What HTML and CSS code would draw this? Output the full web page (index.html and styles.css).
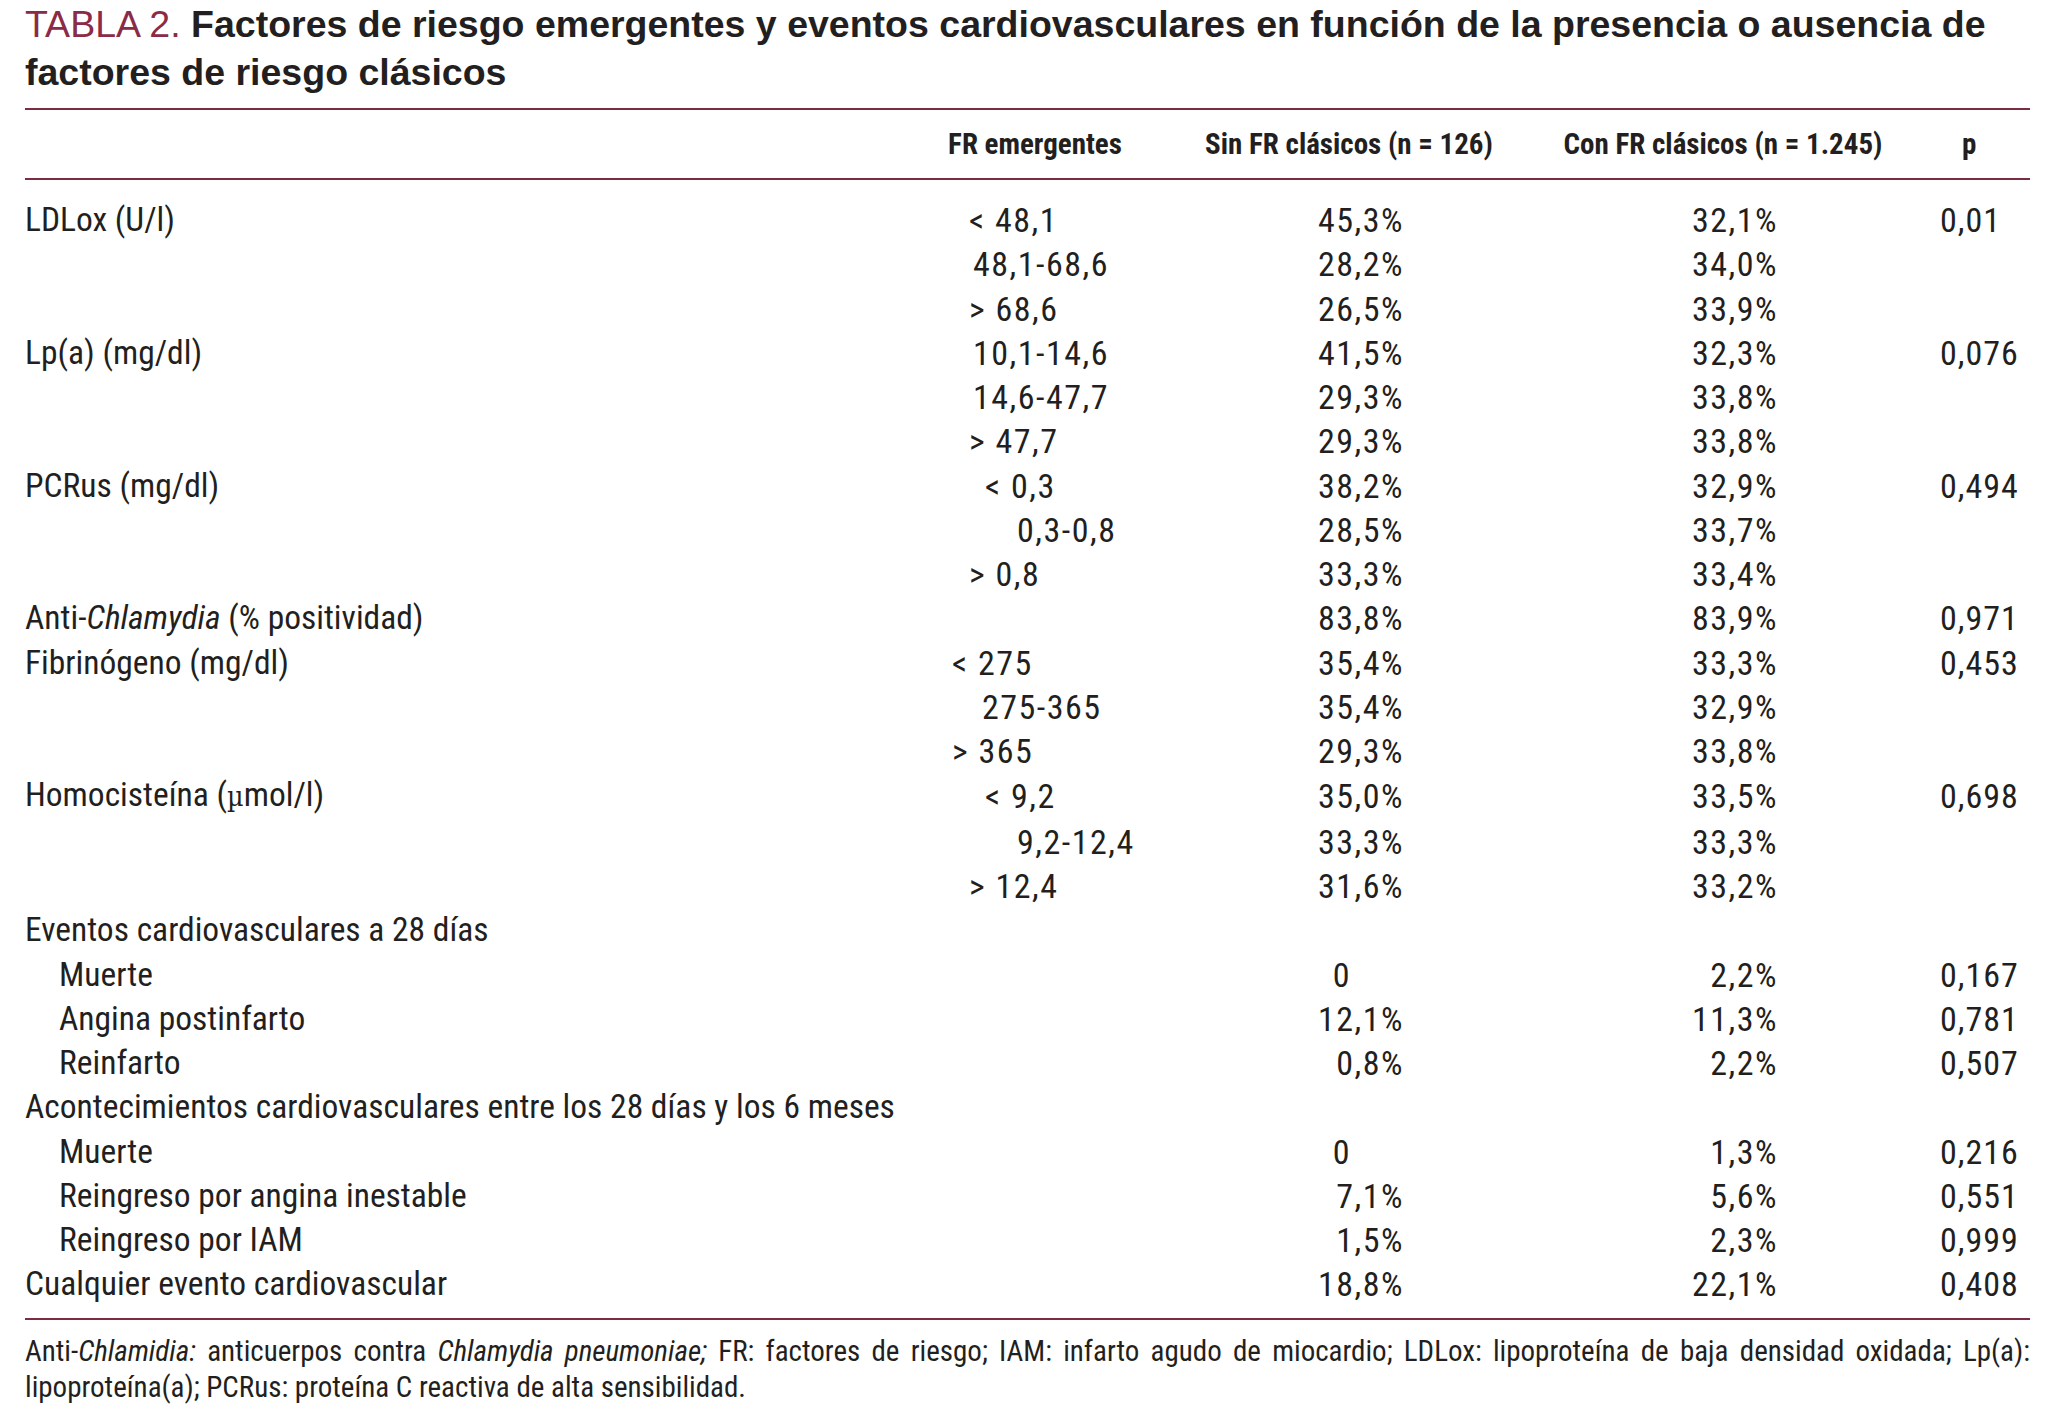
FILE: index.html
```html
<!DOCTYPE html>
<html lang="es">
<head>
<meta charset="utf-8">
<title>Tabla 2</title>
<link rel="stylesheet" href="styles.css">
</head>
<body>
<div class="page">
  <h1 class="title"><span class="label">TABLA 2.</span> Factores de riesgo emergentes y eventos cardiovasculares en función de la presencia o ausencia de factores de riesgo clásicos</h1>
  <table class="tbl">
    <colgroup>
      <col class="c1"><col class="c2"><col class="c3"><col class="c4"><col class="c5">
    </colgroup>
    <thead>
      <tr>
        <th></th>
        <th class="hc">FR emergentes</th>
        <th class="hc">Sin FR clásicos (n = 126)</th>
        <th class="hc">Con FR clásicos (n = 1.245)</th>
        <th class="hp">p</th>
      </tr>
    </thead>
    <tbody>
      <tr class="first"><td>LDLox (U/l)</td><td class="fr b">&lt; 48,1</td><td class="sin">45,3%</td><td class="con">32,1%</td><td class="pv">0,01</td></tr>
      <tr><td></td><td class="fr c">48,1-68,6</td><td class="sin">28,2%</td><td class="con">34,0%</td><td class="pv"></td></tr>
      <tr><td></td><td class="fr b">&gt; 68,6</td><td class="sin">26,5%</td><td class="con">33,9%</td><td class="pv"></td></tr>
      <tr><td>Lp(a) (mg/dl)</td><td class="fr c">10,1-14,6</td><td class="sin">41,5%</td><td class="con">32,3%</td><td class="pv">0,076</td></tr>
      <tr><td></td><td class="fr c">14,6-47,7</td><td class="sin">29,3%</td><td class="con">33,8%</td><td class="pv"></td></tr>
      <tr><td></td><td class="fr b">&gt; 47,7</td><td class="sin">29,3%</td><td class="con">33,8%</td><td class="pv"></td></tr>
      <tr><td>PCRus (mg/dl)</td><td class="fr e">&lt; 0,3</td><td class="sin">38,2%</td><td class="con">32,9%</td><td class="pv">0,494</td></tr>
      <tr><td></td><td class="fr f">0,3-0,8</td><td class="sin">28,5%</td><td class="con">33,7%</td><td class="pv"></td></tr>
      <tr><td></td><td class="fr b">&gt; 0,8</td><td class="sin">33,3%</td><td class="con">33,4%</td><td class="pv"></td></tr>
      <tr><td>Anti-<i>Chlamydia</i> (% positividad)</td><td class="fr"></td><td class="sin">83,8%</td><td class="con">83,9%</td><td class="pv">0,971</td></tr>
      <tr><td>Fibrinógeno (mg/dl)</td><td class="fr a">&lt; 275</td><td class="sin">35,4%</td><td class="con">33,3%</td><td class="pv">0,453</td></tr>
      <tr><td></td><td class="fr d">275-365</td><td class="sin">35,4%</td><td class="con">32,9%</td><td class="pv"></td></tr>
      <tr><td></td><td class="fr a">&gt; 365</td><td class="sin">29,3%</td><td class="con">33,8%</td><td class="pv"></td></tr>
      <tr><td>Homocisteína (<span class="mu">µ</span>mol/l)</td><td class="fr e">&lt; 9,2</td><td class="sin">35,0%</td><td class="con">33,5%</td><td class="pv">0,698</td></tr>
      <tr><td></td><td class="fr f">9,2-12,4</td><td class="sin">33,3%</td><td class="con">33,3%</td><td class="pv"></td></tr>
      <tr><td></td><td class="fr b">&gt; 12,4</td><td class="sin">31,6%</td><td class="con">33,2%</td><td class="pv"></td></tr>
      <tr><td colspan="5">Eventos cardiovasculares a 28 días</td></tr>
      <tr><td class="ind">Muerte</td><td class="fr"></td><td class="sin zero">0</td><td class="con">2,2%</td><td class="pv">0,167</td></tr>
      <tr><td class="ind">Angina postinfarto</td><td class="fr"></td><td class="sin">12,1%</td><td class="con">11,3%</td><td class="pv">0,781</td></tr>
      <tr><td class="ind">Reinfarto</td><td class="fr"></td><td class="sin">0,8%</td><td class="con">2,2%</td><td class="pv">0,507</td></tr>
      <tr><td colspan="5">Acontecimientos cardiovasculares entre los 28 días y los 6 meses</td></tr>
      <tr><td class="ind">Muerte</td><td class="fr"></td><td class="sin zero">0</td><td class="con">1,3%</td><td class="pv">0,216</td></tr>
      <tr><td class="ind">Reingreso por angina inestable</td><td class="fr"></td><td class="sin">7,1%</td><td class="con">5,6%</td><td class="pv">0,551</td></tr>
      <tr><td class="ind">Reingreso por IAM</td><td class="fr"></td><td class="sin">1,5%</td><td class="con">2,3%</td><td class="pv">0,999</td></tr>
      <tr class="last"><td>Cualquier evento cardiovascular</td><td class="fr"></td><td class="sin">18,8%</td><td class="con">22,1%</td><td class="pv">0,408</td></tr>
    </tbody>
  </table>
  <p class="note"><span class="l1">Anti-<i>Chlamidia:</i> anticuerpos contra <i>Chlamydia pneumoniae;</i> FR: factores de riesgo; IAM: infarto agudo de miocardio; LDLox: lipoproteína de baja densidad oxidada; Lp(a):</span><span class="l2">lipoproteína(a); PCRus: proteína C reactiva de alta sensibilidad.</span></p>
</div>
</body>
</html>
```

FILE: styles.css
```css
html, body {
  margin: 0;
  padding: 0;
  background: #ffffff;
}

.page {
  width: 2005px;
  margin-left: 25px;
  color: #231f20;
  font-family: "Roboto Condensed", "Roboto", sans-serif;
  font-stretch: condensed;
}

.title {
  margin: 0;
  padding: 0;
  font-family: "Liberation Sans", Arial, sans-serif;
  font-stretch: normal;
  font-weight: bold;
  font-size: 37.5px;
  line-height: 48px;
  color: #231f20;
}

.title .label {
  font-weight: normal;
  color: #8a2b47;
}

.tbl {
  margin-top: 12px;
  width: 2005px;
  border-collapse: collapse;
  table-layout: fixed;
  border-top: 2px solid #7c2c42;
  border-bottom: 2px solid #7c2c42;
  font-size: 33.5px;
}

.c1 { width: 895px; }
.c2 { width: 230px; }
.c3 { width: 398px; }
.c4 { width: 350px; }
.c5 { width: 132px; }

.tbl th {
  height: 68px;
  padding: 0;
  font-weight: bold;
  font-size: 29px;
  border-bottom: 2px solid #7c2c42;
  white-space: nowrap;
}

.tbl th.hc { text-align: center; }
.tbl th.hp { text-align: left; padding-left: 64px; }

.tbl td {
  padding: 0;
  height: 44.27px;
  line-height: 44.27px;
  white-space: nowrap;
  text-align: left;
  vertical-align: middle;
}

.tbl tr.first td { padding-top: 18px; }
.tbl tr.last td { padding-bottom: 11px; }

.tbl td.ind { padding-left: 34px; }

.tbl td.fr,
.tbl td.sin,
.tbl td.con {
  font-size: 34px;
  letter-spacing: 1.5px;
}

.tbl td.pv {
  font-size: 34px;
  letter-spacing: 1px;
  padding-left: 42px;
}

.tbl td.fr.a { padding-left: 32px; }
.tbl td.fr.b { padding-left: 49px; }
.tbl td.fr.c { padding-left: 53px; }
.tbl td.fr.d { padding-left: 62px; }
.tbl td.fr.e { padding-left: 65px; }
.tbl td.fr.f { padding-left: 97px; }

.tbl td.sin { text-align: right; padding-right: 144px; }
.tbl td.sin.zero { padding-right: 197px; }
.tbl td.con { text-align: right; padding-right: 120px; }

.mu {
  font-family: "DejaVu Serif", serif;
  font-size: 0.85em;
  letter-spacing: 0;
}

.note {
  margin: 13px 0 0 0;
  font-size: 29px;
  line-height: 36px;
}

.note .l1 {
  display: block;
  text-align: justify;
  text-align-last: justify;
}

.note .l2 {
  display: block;
  text-align: left;
}
```
